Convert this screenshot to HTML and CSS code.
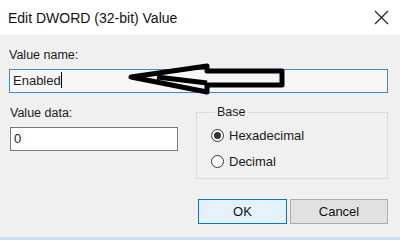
FILE: index.html
```html
<!DOCTYPE html>
<html lang="en">
<head>
  <meta charset="UTF-8" />
  <title>Edit DWORD (32-bit) Value</title>
  <link rel="stylesheet" href="styles.css">
</head>
<body>
  <div class="dialog">
    <div class="titlebar">
      <span class="title">Edit DWORD (32-bit) Value</span>
      <svg class="close" width="15" height="15" viewBox="0 0 15 15">
        <path d="M1 1 L14 14 M14 1 L1 14" stroke="#222" stroke-width="1.2" fill="none" />
      </svg>
    </div>

    <div class="content">
      <div class="label">Value name:</div>
      <div class="name-wrap">
        <div class="field name-field">Enabled<span class="caret"></span></div>
        <!-- hand drawn arrow pointing at the field -->
        <svg class="arrow" width="170" height="36" viewBox="0 0 170 36">
          <path d="M14 14 L90 3 L90 8 L165 8 L165 22 L90 22 L90 29 Z M40 14 L90 20" stroke="#000" stroke-width="5" stroke-linejoin="round" fill="none" />
        </svg>
      </div>

      <div class="row">
        <div class="data-col">
          <div class="label">Value data:</div>
          <div class="field data-field">0</div>
        </div>
        <fieldset class="base">
          <legend>Base</legend>
          <div class="radio"><span class="dot checked"></span>Hexadecimal</div>
          <div class="radio"><span class="dot"></span>Decimal</div>
        </fieldset>
      </div>

      <div class="buttons">
        <button class="btn ok">OK</button>
        <button class="btn cancel">Cancel</button>
      </div>
    </div>
  </div>
</body>
</html>
```

FILE: styles.css
```css
body {
  margin: 0;
  background: #f0f0f0;
  font-family: 'Liberation Sans', Arial, sans-serif;
  color: #1a1a1a;
}

.dialog {
  width: 400px;
  height: 240px;
  overflow: hidden;
  background: #f0f0f0;
  border-bottom: 3px solid #cfe1f2;
  box-sizing: border-box;
}

.titlebar {
  height: 35px;
  background: #fff;
  display: flex;
  align-items: center;
  justify-content: space-between;
  padding: 0 11px 0 8px;
}

.title {
  font-size: 14px;
  color: #111;
}

.content {
  padding: 12px 12px 0 9px;
  font-size: 12.5px;
}

.label {
  line-height: 16px;
  margin-bottom: 6px;
}

.name-wrap {
  position: relative;
}

.field {
  height: 24px;
  box-sizing: border-box;
  line-height: 22px;
  padding-left: 3px;
  background: #fff;
}

.name-field {
  border: 1px solid #3f88c8;
  background: #f7f7f7;
  font-size: 13px;
}

.caret {
  display: inline-block;
  width: 1px;
  height: 16px;
  background: #000;
  vertical-align: -3px;
}

.arrow {
  position: absolute;
  left: 108px;
  top: -6px;
}

.row {
  display: flex;
  gap: 18px;
  margin-top: 12px;
}

.data-col {
  padding-left: 1px;
}

.data-field {
  width: 168px;
  border: 1px solid #7a7a7a;
  font-size: 13px;
}

.base {
  flex: 1;
  margin: 0;
  padding: 3px 0 0 14px;
  border: 1px solid #dcdcdc;
  height: 74px;
  box-sizing: border-box;
}

.base legend {
  padding: 0 2px;
  margin-left: 4px;
  line-height: 14px;
}

.radio {
  display: flex;
  align-items: center;
  gap: 5px;
  height: 26px;
  font-size: 13px;
}

.dot {
  width: 13px;
  height: 13px;
  border: 1px solid #333;
  border-radius: 50%;
  box-sizing: border-box;
  background: #fff;
  display: flex;
  align-items: center;
  justify-content: center;
}

.dot.checked::after {
  content: "";
  width: 7px;
  height: 7px;
  border-radius: 50%;
  background: #333;
}

.buttons {
  display: flex;
  justify-content: flex-end;
  gap: 3px;
  margin-top: 20px;
}

.btn {
  height: 25px;
  font-family: 'Liberation Sans', Arial, sans-serif;
  font-size: 13px;
  color: #111;
  padding: 0;
}

.ok {
  width: 89px;
  border: 1px solid #0078d7;
  background: #e5f1fb;
}

.cancel {
  width: 98px;
  border: 1px solid #adadad;
  background: #e1e1e1;
}
```
